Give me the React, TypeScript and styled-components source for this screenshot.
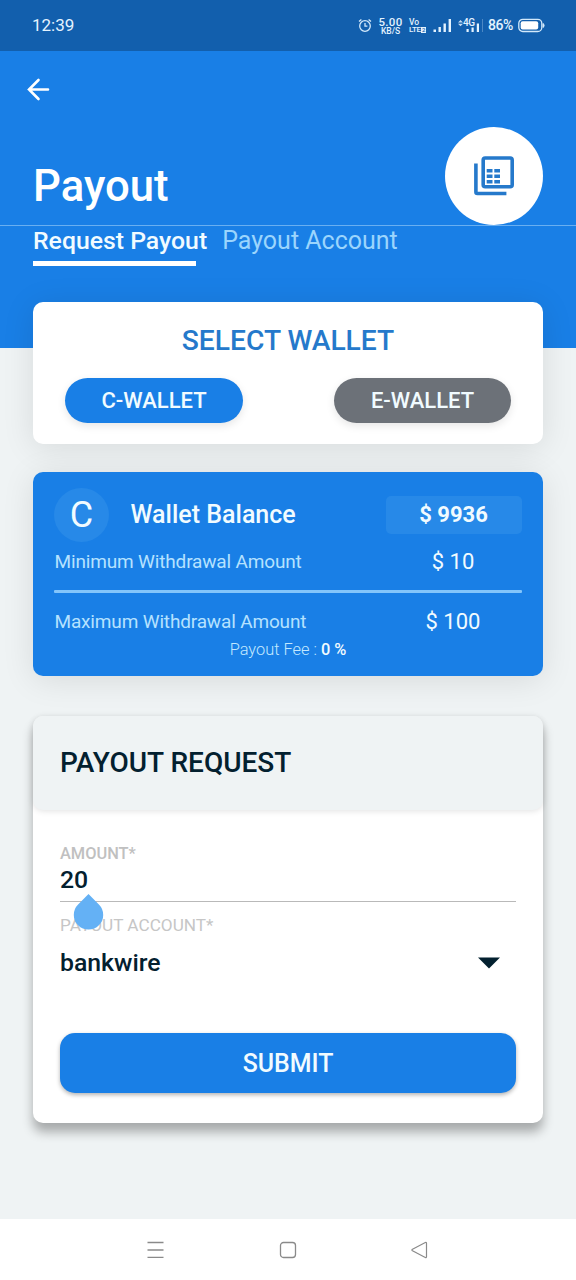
import React from "react";
import styled, { createGlobalStyle } from "styled-components";

const colors = {
  blue: "#197fe6",
  blueDark: "#125fad",
  heading: "#2579cb",
  ink: "#03202f",
  page: "#eff3f4",
  grey: "#6c7178",
  iceWhite: "#f1fbff",
};

const GlobalStyle = createGlobalStyle`
  *, *::before, *::after { box-sizing: border-box; }
  body {
    margin: 0;
    background: ${colors.page};
    font-family: Roboto, "Liberation Sans", sans-serif;
  }
  button { font-family: inherit; border: 0; padding: 0; margin: 0; }
  h1, h2, p { margin: 0; font-weight: 500; }
  svg { display: block; flex: none; }
`;

const Screen = styled.div`
  width: 576px;
  height: 1280px;
  display: flex;
  flex-direction: column;
  background: ${colors.page};
  overflow: hidden;
`;

const StatusBar = styled.div`
  height: 51px;
  flex: none;
  display: flex;
  align-items: center;
  justify-content: space-between;
  padding: 0 31px 0 32px;
  background: ${colors.blueDark};
  color: #e4f3ff;
`;

const Clock = styled.span`
  font-size: 17px;
  line-height: 20px;
  padding-bottom: 1px;
`;

const StatusIcons = styled.div`
  display: flex;
  align-items: center;
`;

const StackedLabel = styled.div<{ $width: number; $left: number; $align?: string }>`
  width: ${(p) => p.$width}px;
  margin-left: ${(p) => p.$left}px;
  display: flex;
  flex-direction: column;
  align-items: ${(p) => p.$align ?? "center"};
  white-space: nowrap;
  font-weight: 500;
`;

const TinyText = styled.span<{ $size: number; $line: number; $spacing?: number }>`
  font-size: ${(p) => p.$size}px;
  line-height: ${(p) => p.$line}px;
  letter-spacing: ${(p) => p.$spacing ?? 0}px;
`;

const SimBadge = styled.span`
  display: inline-block;
  width: 5px;
  margin-left: 0.5px;
  background: #e4f3ff;
  color: ${colors.blueDark};
  font-size: 6px;
  line-height: 6px;
  text-align: center;
`;

const SignalBox = styled.div`
  margin-left: 6px;
`;

const MobileData = styled.div`
  width: 23px;
  margin-left: 6px;
  display: grid;

  > * { grid-area: 1 / 1; }
`;

const NetworkType = styled.span`
  align-self: start;
  padding-left: 5px;
  font-size: 10px;
  line-height: 10px;
  letter-spacing: -0.5px;
  font-weight: 500;
`;

const Divider = styled.span`
  width: 1px;
  height: 13px;
  background: rgba(228, 243, 255, 0.28);
  margin-left: 1px;
`;

const BatteryLevel = styled.span`
  width: 26px;
  margin: 0 4px 0 5px;
  font-size: 14px;
  line-height: 16px;
  font-weight: 500;
  letter-spacing: -0.4px;
  padding-bottom: 1px;
`;

const Header = styled.header`
  height: 297px;
  flex: none;
  background: ${colors.blue};
  color: #fff;
`;

const TitleArea = styled.div`
  height: 175px;
  display: flex;
  flex-direction: column;
  justify-content: space-between;
  border-bottom: 1px solid #69aff1;
`;

const BackButton = styled.button`
  width: 24px;
  height: 24px;
  margin: 26px 0 0 26px;
  background: none;
  color: #fff;
`;

const TitleRow = styled.div`
  height: 98px;
  display: flex;
  justify-content: space-between;
  padding: 0 33px;
`;

const Title = styled.h1`
  padding-top: 31px;
  font-size: 43.7px;
  line-height: 56px;
`;

const RoundButton = styled.button`
  width: 98px;
  height: 98px;
  border-radius: 50%;
  background: #fff;
  display: flex;
  align-items: center;
  justify-content: center;
`;

const Tabs = styled.nav`
  display: flex;
  gap: 15px;
  padding: 0 33px;
`;

const Tab = styled.button<{ $active?: boolean }>`
  display: flex;
  flex-direction: column;
  align-items: flex-start;
  background: none;
  font-size: ${(p) => (p.$active ? 24.8 : 25)}px;
  line-height: 30px;
  font-weight: ${(p) => (p.$active ? 500 : 400)};
  white-space: nowrap;
  color: ${(p) => (p.$active ? colors.iceWhite : "#9bd5fd")};

  &::after {
    content: "";
    width: 163px;
    height: 5px;
    margin-top: 5px;
    background: ${(p) => (p.$active ? "#fff" : "transparent")};
  }
`;

const Content = styled.main`
  flex: 1;
  display: flex;
  flex-direction: column;
  margin-top: -46px;
  padding: 0 33px;
  z-index: 1;
`;

const Card = styled.section`
  border-radius: 10px;
  flex: none;
`;

const WalletCard = styled(Card)`
  height: 142px;
  background: #fff;
  padding: 22px 32px 0;
  box-shadow: 0 4px 32px rgba(0, 0, 0, 0.1);
`;

const WalletHeading = styled.h2`
  font-size: 28.2px;
  line-height: 34px;
  font-weight: 500;
  text-align: center;
  color: ${colors.heading};
`;

const WalletOptions = styled.div`
  display: flex;
  justify-content: space-between;
  margin-top: 20px;
`;

const Pill = styled.button<{ $selected?: boolean }>`
  width: ${(p) => (p.$selected ? 178 : 177)}px;
  height: 45px;
  border-radius: 23px;
  background: ${(p) => (p.$selected ? colors.blue : colors.grey)};
  color: ${colors.iceWhite};
  font-size: 22px;
  font-weight: 500;
  line-height: 45px;
  box-shadow: 0 3px 8px rgba(0, 0, 0, 0.1);
`;

const BalanceCard = styled(Card)`
  height: 204px;
  margin-top: 28px;
  padding: 16px 21px 0 21px;
  background: ${colors.blue};
  color: ${colors.iceWhite};
  box-shadow: 0 4px 32px rgba(0, 0, 0, 0.1);
`;

const BalanceRow = styled.div`
  height: 54px;
  display: flex;
  align-items: center;
`;

const Avatar = styled.span`
  width: 55px;
  height: 54px;
  border-radius: 50%;
  background: #2789e8;
  font-size: 36px;
  line-height: 55px;
  text-align: center;
`;

const BalanceLabel = styled.span`
  flex: 1;
  padding: 0 0 0 21.5px;
  font-size: 25px;
  line-height: 30px;
  font-weight: 500;
`;

const BalanceValue = styled.span`
  width: 136px;
  height: 38px;
  border-radius: 5px;
  background: #2789e8;
  font-size: 22px;
  line-height: 38px;
  font-weight: 700;
  text-align: center;
  text-indent: -1px;
`;

const LimitRow = styled.div<{ $top: number }>`
  display: flex;
  justify-content: space-between;
  align-items: center;
  margin-top: ${(p) => p.$top}px;
  height: 30px;
`;

const LimitLabel = styled.span`
  padding-left: 0.5px;
  font-size: 19px;
  letter-spacing: -0.16px;
  color: #b5e2ff;
`;

const LimitValue = styled.span`
  width: 136px;
  font-size: 22px;
  text-align: center;
  text-indent: -2px;
`;

const Rule = styled.hr`
  height: 3px;
  margin: 14px 0 0;
  border: 0;
  border-radius: 1px;
  background: #83c5fb;
`;

const Fee = styled.p`
  font-size: 16.4px;
  line-height: 20px;
  margin-top: 4px;
  font-weight: 300;
  text-align: center;
  color: #c2e8ff;

  b { font-weight: 500; color: ${colors.iceWhite}; }
`;

const RequestCard = styled(Card)`
  height: 407px;
  margin-top: 40px;
  background: #fff;
  box-shadow: 0 9px 11px rgba(0, 0, 0, 0.3);
`;

const RequestHeader = styled.div`
  height: 94px;
  padding: 0 27px;
  border-radius: 10px;
  background: ${colors.page};
  box-shadow: 0 1px 6px rgba(0, 0, 0, 0.12);
`;

const RequestTitle = styled.h2`
  font-size: 28px;
  line-height: 94px;
  font-weight: 500;
  color: ${colors.ink};
`;

const Form = styled.div`
  padding: 34px 27px 0;
`;

const Field = styled.div`
  position: relative;
  height: 58px;
  border-bottom: 1px solid #b9b9b9;
`;

const FieldLabel = styled.label<{ $focused?: boolean }>`
  display: block;
  font-size: ${(p) => (p.$focused ? 16.4 : 17.2)}px;
  line-height: 20px;
  font-weight: ${(p) => (p.$focused ? 500 : 400)};
  color: ${(p) => (p.$focused ? "#c0c0c0" : "#c6c6c6")};
`;

const FieldValue = styled.div`
  font-size: 24.8px;
  line-height: 32px;
  font-weight: 500;
  color: ${colors.ink};
`;

const CursorHandle = styled.svg`
  position: absolute;
  left: 13px;
  top: 49px;
`;

const SelectField = styled.div`
  padding-top: 13px;
`;

const SelectRow = styled.div`
  display: flex;
  justify-content: space-between;
  align-items: center;
  padding-right: 16px;
  margin-top: 12px;
`;

const SubmitButton = styled.button`
  display: block;
  width: 100%;
  height: 60px;
  margin-top: 54px;
  border-radius: 15px;
  background: ${colors.blue};
  color: ${colors.iceWhite};
  font-size: 24.9px;
  line-height: 60px;
  padding-top: 1px;
  font-weight: 500;
  box-shadow: 0 2px 4px rgba(0, 0, 0, 0.3);
`;

const NavBar = styled.footer`
  height: 61px;
  flex: none;
  display: flex;
  justify-content: center;
  align-items: center;
  gap: 114px;
  padding-top: 1px;
  background: #fff;
`;

const AlarmIcon = () => (
  <svg width="14" height="15" viewBox="0 0 14 15" fill="none" stroke="#d3e9fb" strokeWidth="1.3">
    <circle cx="7" cy="8" r="5.3" />
    <path d="M7 5v3.2h2.4M1 3.6l2.4-2.1M13 3.6l-2.4-2.1" />
  </svg>
);

const SignalIcon = () => (
  <svg width="19" height="15" viewBox="0 0 19 15" fill="#e4f3ff">
    <path d="M0.5 11.5h2.5v2.5h-2.5zM5.5 9h2.4v5h-2.4zM10.5 5.5h2.4v8.5h-2.4zM15.6 1h2.4v13h-2.4z" />
  </svg>
);

const DataSignalIcon = () => (
  <svg width="23" height="15" viewBox="0 0 23 15" fill="#e4f3ff">
    <path d="M0 4.5l2.5-2.5 2.5 2.5zM0 5.7l2.5 2.5 2.5-2.5z" opacity="0.85" />
    <path d="M8.5 11h2.2v3h-2.2zM13.5 9.5h2.2v4.5h-2.2zM18.8 5.5h2.2v8.5h-2.2z" />
  </svg>
);

const BatteryIcon = () => (
  <svg width="27" height="15" viewBox="0 0 27 15" fill="none">
    <rect x="0.8" y="1.3" width="23" height="12.2" rx="4" stroke="#d3e9fb" strokeWidth="1.3" />
    <rect x="2.7" y="3.2" width="17.5" height="8.4" rx="2" fill="#fff" />
    <path d="M25 5.5c1.5 0.7 1.5 3.3 0 4z" fill="#d3e9fb" stroke="#d3e9fb" />
  </svg>
);

const BackIcon = () => (
  <svg width="24" height="24" viewBox="0 0 24 24" fill="none" stroke="#fff" strokeWidth="2.6" strokeLinecap="round">
    <path d="M22 12.5H3M12.5 3L3 12.5L12.5 22" />
  </svg>
);

const LedgerIcon = () => (
  <svg width="40" height="40" viewBox="0 0 40 40" fill="none" stroke={colors.heading} strokeWidth="3.6">
    <rect x="9.2" y="2" width="29" height="28.7" rx="2" />
    <path d="M1.9 7.5v28.5a1.5 1.5 0 0 0 1.5 1.5h29" />
    <path d="M12.7 14.8h5.8M20.3 14.8h5.7M12.7 20.3h5.8M20.3 20.3h5.7M12.7 25.8h5.8M20.3 25.8h5.7" />
  </svg>
);

const Handle = () => (
  <CursorHandle width="31" height="37" viewBox="0 0 31 37">
    <path d="M15.5 1L25.9 11.5A14.7 14.7 0 1 1 5.1 11.5Z" fill="#64b1f5" />
  </CursorHandle>
);

const CaretIcon = () => (
  <svg width="23" height="12" viewBox="0 0 23 12">
    <path d="M1 0.5h22L12 11.5z" fill={colors.ink} />
  </svg>
);

export default function App() {
  return (
    <Screen>
      <GlobalStyle />
      <StatusBar>
        <Clock>12:39</Clock>
        <StatusIcons>
          <AlarmIcon />
          <StackedLabel $width={25} $left={6}>
            <TinyText $size={11.5} $line={10} $spacing={0.3}>5.00</TinyText>
            <TinyText $size={8.5} $line={8}>KB/S</TinyText>
          </StackedLabel>
          <StackedLabel $width={18} $left={6} $align="flex-start">
            <TinyText $size={8.5} $line={8}>Vo</TinyText>
            <TinyText $size={8} $line={8} $spacing={-0.4}>
              LTE<SimBadge>2</SimBadge>
            </TinyText>
          </StackedLabel>
          <SignalBox>
            <SignalIcon />
          </SignalBox>
          <MobileData>
            <DataSignalIcon />
            <NetworkType>4G</NetworkType>
          </MobileData>
          <Divider />
          <BatteryLevel>86%</BatteryLevel>
          <BatteryIcon />
        </StatusIcons>
      </StatusBar>

      <Header>
        <TitleArea>
          <BackButton aria-label="Back">
            <BackIcon />
          </BackButton>
          <TitleRow>
            <Title>Payout</Title>
            <RoundButton aria-label="Payout history">
              <LedgerIcon />
            </RoundButton>
          </TitleRow>
        </TitleArea>
        <Tabs>
          <Tab $active>Request Payout</Tab>
          <Tab>Payout Account</Tab>
        </Tabs>
      </Header>

      <Content>
        <WalletCard>
          <WalletHeading>SELECT WALLET</WalletHeading>
          <WalletOptions>
            <Pill $selected>C-WALLET</Pill>
            <Pill>E-WALLET</Pill>
          </WalletOptions>
        </WalletCard>

        <BalanceCard>
          <BalanceRow>
            <Avatar>C</Avatar>
            <BalanceLabel>Wallet Balance</BalanceLabel>
            <BalanceValue>$ 9936</BalanceValue>
          </BalanceRow>
          <LimitRow $top={4}>
            <LimitLabel>Minimum Withdrawal Amount</LimitLabel>
            <LimitValue>$ 10</LimitValue>
          </LimitRow>
          <Rule />
          <LimitRow $top={13}>
            <LimitLabel>Maximum Withdrawal Amount</LimitLabel>
            <LimitValue>$ 100</LimitValue>
          </LimitRow>
          <Fee>
            Payout Fee : <b>0 %</b>
          </Fee>
        </BalanceCard>

        <RequestCard>
          <RequestHeader>
            <RequestTitle>PAYOUT REQUEST</RequestTitle>
          </RequestHeader>
          <Form>
            <Field>
              <FieldLabel $focused>AMOUNT*</FieldLabel>
              <FieldValue>20</FieldValue>
              <Handle />
            </Field>
            <SelectField>
              <FieldLabel>PAYOUT ACCOUNT*</FieldLabel>
              <SelectRow>
                <FieldValue>bankwire</FieldValue>
                <CaretIcon />
              </SelectRow>
            </SelectField>
            <SubmitButton>SUBMIT</SubmitButton>
          </Form>
        </RequestCard>
      </Content>

      <NavBar>
        <svg width="18" height="18" viewBox="0 0 18 18" stroke="#8a8a8a" strokeWidth="1.3">
          <path d="M0.5 1.5h16M0.5 9h16M0.5 16.3h16" />
        </svg>
        <svg width="18" height="18" viewBox="0 0 18 18" fill="none" stroke="#8a8a8a" strokeWidth="1.3">
          <rect x="1.5" y="1.5" width="15" height="15" rx="3" />
        </svg>
        <svg width="18" height="18" viewBox="0 0 18 18" fill="none" stroke="#8a8a8a" strokeWidth="1.2">
          <path d="M1.5 8.2L14.3 1.5Q15.5 1 15.5 2.3V15.7Q15.5 17 14.3 16.5L1.5 9.8Q0.3 9 1.5 8.2Z" />
        </svg>
      </NavBar>
    </Screen>
  );
}
